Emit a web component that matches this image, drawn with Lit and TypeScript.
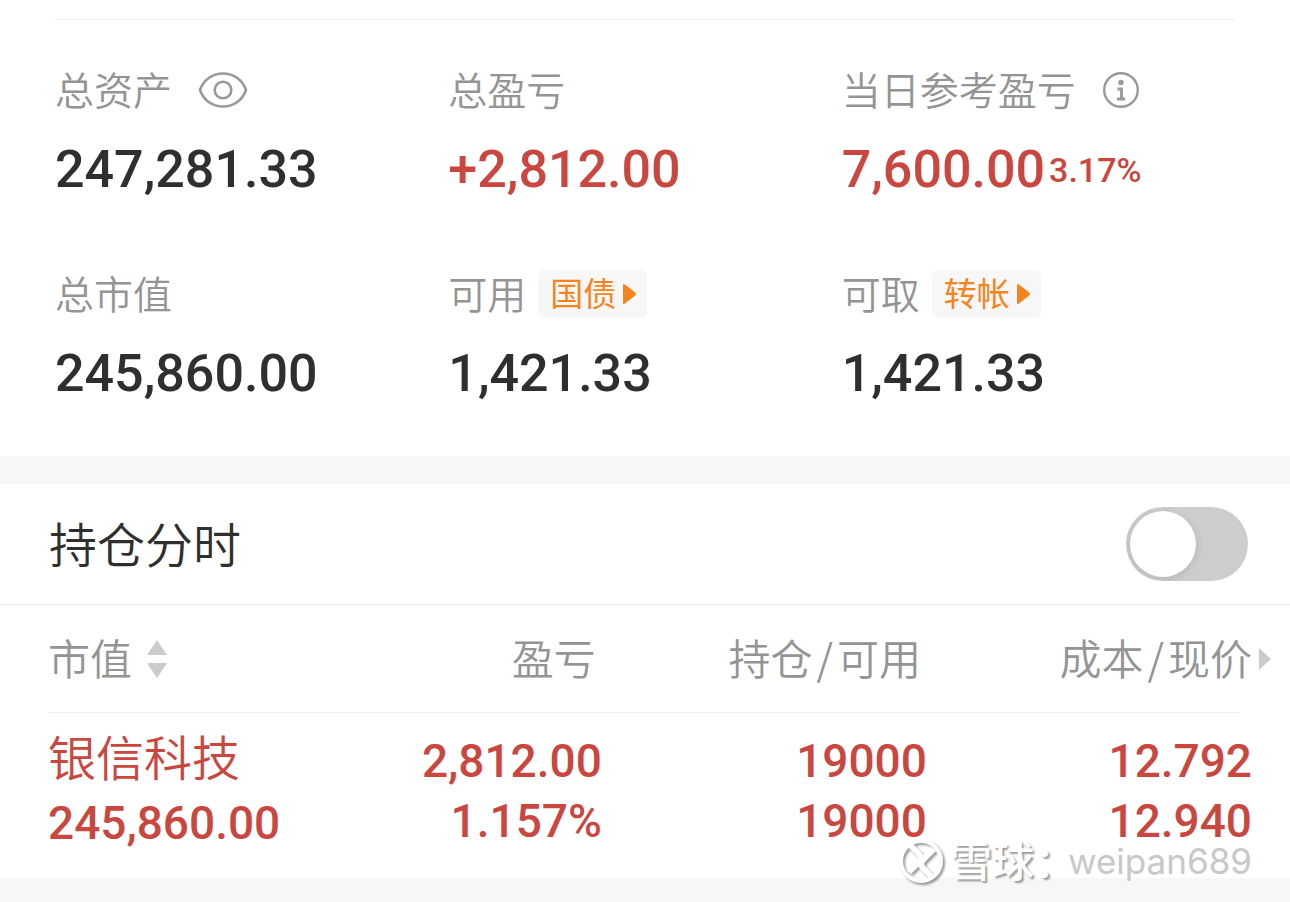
import { LitElement, css, html } from "lit";
import { customElement, state } from "lit/decorators.js";

interface Holding {
  name: string;
  marketValue: string;
  profit: string;
  profitRate: string;
  position: string;
  available: string;
  cost: string;
  price: string;
}

const holdings: Holding[] = [
  {
    name: "银信科技",
    marketValue: "245,860.00",
    profit: "2,812.00",
    profitRate: "1.157%",
    position: "19000",
    available: "19000",
    cost: "12.792",
    price: "12.940",
  },
];

// Lifts Chinese text so its optical centre meets the centre of its row.
const hanText = css`
  .han {
    display: inline-block;
    padding-bottom: 4px;
  }
`;

@customElement("account-summary")
export class AccountSummary extends LitElement {
  static styles = [
    hanText,
    css`
      :host {
        display: block;
        padding-top: 19px;
      }
      .grid {
        display: grid;
        grid-template-columns: repeat(3, 1fr);
        row-gap: 70px;
        margin: 0 55px;
        padding: 46px 0 52px;
        border-top: 1px solid #efefef;
      }
      .label {
        display: flex;
        align-items: center;
        height: 48px;
        font-size: 39px;
        font-weight: 350;
        line-height: 44px;
        color: #949494;
        white-space: nowrap;
      }
      .value {
        display: flex;
        align-items: center;
        gap: 4px;
        margin-top: 26px;
        font-family: Roboto, "Liberation Sans", sans-serif;
        font-size: 52px;
        font-weight: 500;
        line-height: 60px;
        color: #2f2f2f;
        white-space: nowrap;
      }
      .up {
        color: #c9473f;
      }
      .rate {
        font-size: 34px;
      }
      .icon {
        display: flex;
        margin: 0 0 0 26px;
        padding: 0;
        border: 0;
        background: none;
        color: #999;
      }
      .tag {
        display: flex;
        align-items: center;
        gap: 6px;
        height: 48px;
        margin: 0 0 0 12px;
        padding: 0 10px 0 12px;
        border: 0;
        border-radius: 6px;
        background: #f7f7f7;
        font-family: inherit;
        font-size: 33px;
        font-weight: 400;
        line-height: 44px;
        color: #f5841f;
      }
    `,
  ];

  private tag(text: string) {
    return html`<button class="tag" type="button">
      <span class="han">${text}</span>
      <svg width="15" height="22" viewBox="0 0 15 22" aria-hidden="true">
        <path d="M1 2.5Q1 0 3 1.6L13.2 9.6Q14.8 11 13.2 12.4L3 20.4Q1 22 1 19.5Z" fill="currentColor" />
      </svg>
    </button>`;
  }

  render() {
    return html`
      <div class="grid">
        <div>
          <div class="label">
            <span class="han">总资产</span>
            <button class="icon" type="button" aria-label="显示或隐藏金额">
              <svg width="50" height="38" viewBox="0 0 50 38" fill="none" stroke="currentColor" stroke-width="2.6">
                <path d="M2 19C5.500 9 14 2.500 25 2.500S44.500 9 48 19C44.500 29 36 35.500 25 35.500S5.500 29 2 19Z" />
                <circle cx="25" cy="19" r="8.300" />
              </svg>
            </button>
          </div>
          <div class="value">247,281.33</div>
        </div>
        <div>
          <div class="label"><span class="han">总盈亏</span></div>
          <div class="value up">+2,812.00</div>
        </div>
        <div>
          <div class="label">
            <span class="han">当日参考盈亏</span>
            <button class="icon" type="button" aria-label="说明">
              <svg width="38" height="38" viewBox="0 0 38 38" fill="none" stroke="currentColor">
                <circle cx="19" cy="19" r="16.800" stroke-width="2.400" />
                <circle cx="19" cy="11.500" r="2.700" fill="currentColor" stroke="none" />
                <path d="M15.500 18H19.500V28M15 28H23.200" stroke-width="2.800" />
              </svg>
            </button>
          </div>
          <div class="value up">7,600.00<span class="rate">3.17%</span></div>
        </div>
        <div>
          <div class="label"><span class="han">总市值</span></div>
          <div class="value">245,860.00</div>
        </div>
        <div>
          <div class="label"><span class="han">可用</span>${this.tag("国债")}</div>
          <div class="value">1,421.33</div>
        </div>
        <div>
          <div class="label"><span class="han">可取</span>${this.tag("转帐")}</div>
          <div class="value">1,421.33</div>
        </div>
      </div>
    `;
  }
}

@customElement("holdings-table")
export class HoldingsTable extends LitElement {
  static styles = [
    hanText,
    css`
      :host {
        display: block;
        padding: 0 38px 0 48px;
      }
      .table {
        width: 100%;
        table-layout: fixed;
        border-collapse: collapse;
      }
      .col-name {
        width: 22%;
      }
      .col-profit {
        width: 24%;
      }
      .head {
        background: linear-gradient(#efefef, #efefef) left bottom / calc(100% - 12px) 1px no-repeat;
      }
      .th {
        height: 108px;
        padding: 0;
        font-size: 42px;
        font-weight: 350;
        line-height: 56px;
        color: #949494;
        text-align: right;
        white-space: nowrap;
      }
      .th.first {
        text-align: left;
      }
      .th.inset {
        padding-right: 6px;
      }
      .slash {
        margin: 0 4px;
      }
      .sort {
        display: inline-flex;
        align-items: center;
        gap: 14px;
        padding: 0;
        border: 0;
        background: none;
        font: inherit;
        color: inherit;
      }
      .more {
        display: inline-flex;
        align-items: center;
        gap: 6px;
        margin-right: -20px;
      }
      .td {
        height: 165px;
        padding: 18px 0 0;
        box-sizing: border-box;
        font-family: Roboto, "Liberation Sans", sans-serif;
        font-size: 46px;
        font-weight: 500;
        line-height: 60px;
        color: #c9473f;
        text-align: right;
        vertical-align: top;
        white-space: nowrap;
      }
      .td.first {
        padding-top: 12px;
        text-align: left;
      }
      .name {
        margin-bottom: 8px;
        font-family: "Noto Sans CJK SC", sans-serif;
        font-size: 48px;
        font-weight: 350;
      }
    `,
  ];

  render() {
    return html`
      <table class="table">
        <colgroup>
          <col class="col-name" />
          <col class="col-profit" />
          <col />
          <col />
        </colgroup>
        <thead class="head">
          <tr>
            <th class="th first" scope="col">
              <button class="sort" type="button">
                <span class="han">市值</span>
                <svg width="22" height="40" viewBox="0 0 22 40" fill="#cbcbcb" aria-hidden="true">
                  <path d="M11 1L21 16H1ZM1 24H21L11 39Z" />
                </svg>
              </button>
            </th>
            <th class="th inset" scope="col"><span class="han">盈亏</span></th>
            <th class="th inset" scope="col">
              <span class="han">持仓<span class="slash">/</span>可用</span>
            </th>
            <th class="th" scope="col">
              <span class="more">
                <span class="han">成本<span class="slash">/</span>现价</span>
                <svg width="14" height="24" viewBox="0 0 14 24" fill="#cbcbcb" aria-hidden="true">
                  <path d="M1 1L13 12L1 23Z" />
                </svg>
              </span>
            </th>
          </tr>
        </thead>
        <tbody>
          ${holdings.map(
            (h) => html`<tr>
              <td class="td first">
                <div class="name">${h.name}</div>
                <div>${h.marketValue}</div>
              </td>
              <td class="td">
                <div>${h.profit}</div>
                <div>${h.profitRate}</div>
              </td>
              <td class="td">
                <div>${h.position}</div>
                <div>${h.available}</div>
              </td>
              <td class="td">
                <div>${h.cost}</div>
                <div>${h.price}</div>
              </td>
            </tr>`
          )}
        </tbody>
      </table>
    `;
  }
}

@customElement("app-root")
export class AppRoot extends LitElement {
  @state() private intraday = false;

  static styles = [
    hanText,
    css`
      :host {
        display: block;
        position: relative;
        min-height: 100vh;
        background: #f7f7f7;
        font-family: "Noto Sans CJK SC", sans-serif;
      }
      .card {
        background: #fff;
      }
      .card + .card {
        margin-top: 28px;
      }
      .bar {
        display: flex;
        align-items: center;
        justify-content: space-between;
        height: 120px;
        padding: 0 42px 0 49px;
        border-bottom: 1px solid #ececec;
        font-size: 48px;
        font-weight: 350;
        color: #2f2f2f;
      }
      .switch {
        display: flex;
        align-items: center;
        width: 122px;
        height: 74px;
        margin: 0;
        padding: 0 4px;
        box-sizing: border-box;
        appearance: none;
        border-radius: 37px;
        background: #cdcdcd;
        overflow: hidden;
      }
      .switch::before {
        content: "";
        width: 66px;
        height: 66px;
        border-radius: 50%;
        background: #fff;
        box-shadow: 0 2px 8px rgba(0, 0, 0, 0.12);
      }
      .switch:checked {
        justify-content: flex-end;
        background: #c9473f;
      }
      .mark {
        position: absolute;
        right: 38px;
        bottom: 14px;
        display: flex;
        align-items: center;
        height: 54px;
        line-height: 40px;
        white-space: nowrap;
        pointer-events: none;
      }
      .logo {
        filter: drop-shadow(2px 2px 1px rgba(0, 0, 0, 0.4));
      }
      .brand {
        margin-left: 6px;
        font-size: 42px;
        font-weight: 500;
        color: #fff;
        text-shadow: 2px 2px 2px rgba(0, 0, 0, 0.4);
      }
      .user {
        margin-left: -8px;
        font-family: Inter, "Liberation Sans", sans-serif;
        font-size: 35px;
        color: #c8c8c8;
      }
    `,
  ];

  render() {
    return html`
      <section class="card"><account-summary></account-summary></section>
      <section class="card">
        <div class="bar">
          <label class="han" for="intraday">持仓分时</label>
          <input
            id="intraday"
            class="switch"
            type="checkbox"
            role="switch"
            .checked=${this.intraday}
            @change=${(e: Event) => (this.intraday = (e.target as HTMLInputElement).checked)}
          />
        </div>
        <holdings-table></holdings-table>
      </section>
      <div class="mark">
        <svg class="logo" width="46" height="46" viewBox="0 0 46 46" fill="none" stroke="#fff" aria-hidden="true">
          <circle cx="23" cy="23" r="20" stroke-width="4" />
          <path
            d="M12 7L21 16Q25 20 21 24L11 34M34 39L25 30Q21 26 25 22L36 11"
            stroke-width="6"
            stroke-linejoin="round"
          />
        </svg>
        <span class="brand han">雪球：</span>
        <span class="user">weipan689</span>
      </div>
    `;
  }
}
